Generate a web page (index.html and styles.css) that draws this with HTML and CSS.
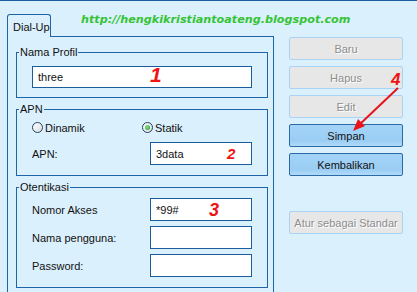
FILE: index.html
```html
<!DOCTYPE html>
<html lang="id">
<head>
    <meta charset="UTF-8">
    <title>Dial-Up</title>
    <link rel="stylesheet" href="styles.css">
</head>
<body>
    <div class="strip">
        <div class="tab">Dial-Up</div>
        <div class="site">http://hengkikristiantoateng.blogspot.com</div>
    </div>

    <div class="main">
        <div class="panel">
            <fieldset class="group">
                <legend>Nama Profil</legend>
                <input class="field wide" type="text" value="three">
            </fieldset>

            <fieldset class="group apn">
                <legend>APN</legend>
                <div class="radios">
                    <label class="radio"><span class="dot"></span>Dinamik</label>
                    <label class="radio checked"><span class="dot"></span>Statik</label>
                </div>
                <div class="row">
                    <span class="label">APN:</span>
                    <input class="field" type="text" value="3data">
                </div>
            </fieldset>

            <fieldset class="group auth">
                <legend>Otentikasi</legend>
                <div class="row">
                    <span class="label">Nomor Akses</span>
                    <input class="field" type="text" value="*99#">
                </div>
                <div class="row">
                    <span class="label">Nama pengguna:</span>
                    <input class="field" type="text" value="">
                </div>
                <div class="row">
                    <span class="label">Password:</span>
                    <input class="field" type="password" value="">
                </div>
            </fieldset>
        </div>

        <div class="buttons">
            <button disabled>Baru</button>
            <button disabled>Hapus</button>
            <button disabled>Edit</button>
            <button class="active">Simpan</button>
            <button class="active">Kembalikan</button>
            <button class="standard" disabled>Atur sebagai Standar</button>
        </div>
    </div>

    <!-- annotations drawn over the dialog -->
    <span class="num n1">1</span>
    <span class="num n2">2</span>
    <span class="num n3">3</span>
    <span class="num n4">4</span>
    <svg class="arrow" width="70" height="60" viewBox="0 0 70 60">
        <line x1="58" y1="8" x2="19" y2="45" stroke="#e8141a" stroke-width="2"/>
        <polygon points="13,51 25,46 18,39" fill="#e8141a"/>
    </svg>
</body>
</html>
```

FILE: styles.css
```css
body {
    margin: 0;
    height: 291px;
    overflow: hidden;
    background: #dbf0fd;
    border-top: 1px solid #1c5d9e;
    font-family: "Liberation Sans", Arial, sans-serif;
    font-size: 11px;
    color: #111;
}

.strip {
    display: flex;
    align-items: flex-end;
    height: 36px;
}

.tab {
    position: relative;
    z-index: 1;
    margin-left: 7px;
    width: 37px;
    height: 22px;
    border: 1px solid #1d64a8;
    border-bottom: none;
    border-radius: 3px 3px 0 0;
    background: #dbf0fd;
    padding-left: 5px;
    line-height: 24px;
    box-sizing: content-box;
}

.site {
    align-self: flex-start;
    margin-top: 12px;
    margin-left: 30px;
    font-family: "DejaVu Sans", Verdana, sans-serif;
    font-size: 11.2px;
    font-weight: bold;
    font-style: italic;
    color: #35c435;
    line-height: 14px;
}

.main {
    display: flex;
    margin-top: -1px;
}

.panel {
    margin-left: 7px;
    width: 252px;
    height: 260px;
    border: 1px solid #1d64a8;
    padding: 9px 5px 0 8px;
}

.group {
    margin: 0;
    width: 252px;
    box-sizing: border-box;
    border: 1px solid #1d64a8;
    padding: 7px 15px 9px 15px;
}

.group + .group {
    margin-top: 5px;
}

.group legend {
    margin-left: -13px;
    padding: 0 1px;
    line-height: 13px;
}

.field {
    box-sizing: border-box;
    width: 102px;
    height: 23px;
    margin: 0;
    border: 1px solid #1b5c9c;
    background: #fff;
    padding: 0 5px;
    font: inherit;
    color: #111;
}

.field.wide {
    width: 220px;
    height: 22px;
}

.apn {
    padding-top: 5px;
    padding-bottom: 10px;
}

.radios {
    display: flex;
    height: 13px;
    align-items: center;
    margin-bottom: 8px;
}

.radio {
    display: flex;
    align-items: center;
    width: 110px;
}

.dot {
    display: flex;
    align-items: center;
    justify-content: center;
    width: 9px;
    height: 9px;
    margin-right: 2px;
    border: 1px solid #24405e;
    border-radius: 50%;
    background: linear-gradient(135deg, #ffffff, #d9dde2);
}

.radio.checked .dot::after {
    content: "";
    width: 5px;
    height: 5px;
    border-radius: 50%;
    background: radial-gradient(circle at 40% 40%, #8ee08a, #1f9a1f);
}

.row {
    display: flex;
    align-items: center;
    justify-content: space-between;
}

.auth {
    padding-top: 4px;
    padding-bottom: 10px;
}

.auth .row + .row {
    margin-top: 5px;
}

.buttons {
    display: flex;
    flex-direction: column;
    gap: 6px;
    margin-left: 15px;
    padding-top: 1px;
}

.buttons button {
    width: 114px;
    height: 23px;
    margin: 0;
    padding: 0;
    border: 1px solid #a9d3f4;
    border-radius: 2px;
    background: #e7e7e7;
    font: inherit;
    color: #8d8d8d;
    text-shadow: 1px 1px 0 #fff;
}

.buttons button.active {
    border-color: #2a6aa6;
    background: linear-gradient(#a3d3f7, #9bcdf4 75%, #b0dbfa);
    color: #111;
    text-shadow: none;
}

.buttons button.standard {
    margin-top: 29px;
}

.num {
    position: absolute;
    font-family: "Liberation Sans", Arial, sans-serif;
    font-weight: bold;
    font-style: italic;
    line-height: 1;
    color: #ee1414;
}

.n1 { left: 150px; top: 64px; font-size: 21px; }
.n2 { left: 227px; top: 146px; font-size: 15px; }
.n3 { left: 209px; top: 201px; font-size: 18px; }
.n4 { left: 391px; top: 71px; font-size: 17px; }

.arrow {
    position: absolute;
    left: 340px;
    top: 80px;
}
```
